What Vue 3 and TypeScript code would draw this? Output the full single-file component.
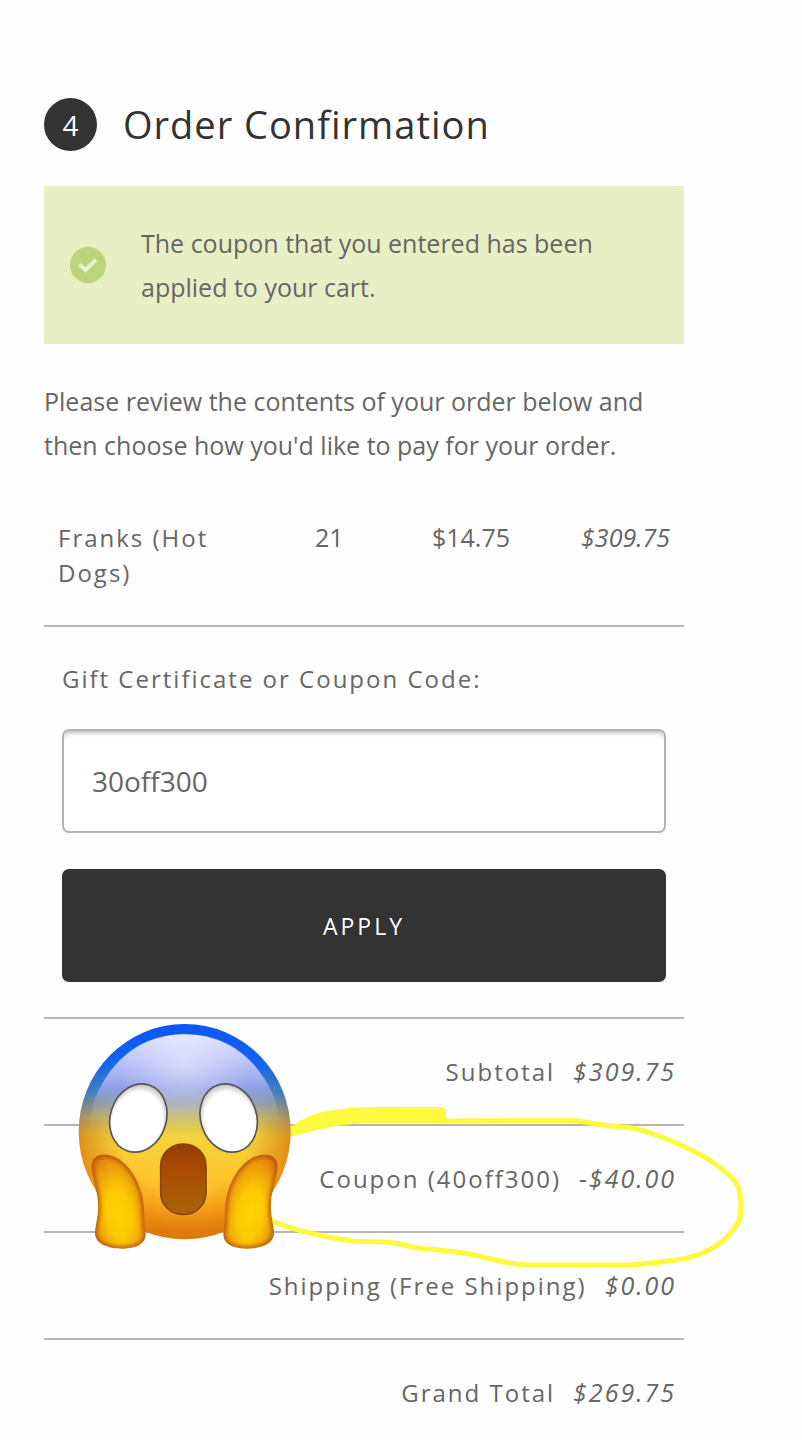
<script setup lang="ts">
import { ref } from 'vue'

interface OrderItem {
  name: string
  quantity: number
  price: string
  total: string
}

interface TotalLine {
  label: string
  amount: string
}

const items: OrderItem[] = [
  { name: 'Franks (Hot Dogs)', quantity: 21, price: '$14.75', total: '$309.75' },
]

const totals: TotalLine[] = [
  { label: 'Subtotal', amount: '$309.75' },
  { label: 'Coupon (40off300)', amount: '-$40.00' },
  { label: 'Shipping (Free Shipping)', amount: '$0.00' },
  { label: 'Grand Total', amount: '$269.75' },
]

const code = ref('30off300')
</script>

<template>
  <main class="page">
    <header class="step">
      <span class="badge">4</span>
      <h1>Order Confirmation</h1>
    </header>

    <div class="notice" role="status">
      <svg class="check" viewBox="0 0 36 36" aria-hidden="true">
        <circle cx="18" cy="18" r="18" fill="#bcd57c" />
        <path d="M9.500 17.500 L15.500 23 L26 12.500" fill="none" stroke="#e9f0cb" stroke-width="4" />
      </svg>
      <p>The coupon that you entered has been applied to your cart.</p>
    </div>

    <p class="intro">
      Please review the contents of your order below and then choose how you'd like to pay for your order.
    </p>

    <table class="items">
      <tbody>
        <tr v-for="item in items" :key="item.name">
          <th scope="row">{{ item.name }}</th>
          <td class="qty">{{ item.quantity }}</td>
          <td class="price">{{ item.price }}</td>
          <td class="sum">{{ item.total }}</td>
        </tr>
      </tbody>
    </table>

    <form class="coupon" @submit.prevent>
      <label for="code">Gift Certificate or Coupon Code:</label>
      <input id="code" v-model="code" type="text" />
      <button type="submit">APPLY</button>
    </form>

    <section class="totals">
      <table>
        <tbody>
          <tr v-for="line in totals" :key="line.label">
            <td><span class="label">{{ line.label }}</span><em>{{ line.amount }}</em></td>
          </tr>
        </tbody>
      </table>

      <svg class="scribble" viewBox="270 1090 490 190" aria-hidden="true">
        <path
          d="M289 1128 Q300 1120 312 1115 C337 1107 365 1107 387 1107 L440 1107 Q446 1108 446 1114 L446 1121 L440 1123 L365 1123 Q335 1125 313 1131 L289 1137 Z"
          fill="#fdf93c"
        />
        <path
          d="M440 1121 L570 1120.500 C585 1121 592 1124 603 1125 C615 1127 622 1126 635 1128.500 C650 1132 670 1140 687 1148 C702 1155 720 1166 731 1177 C739 1184 740 1192 741 1202 C741 1212 741 1218 738 1223 C727 1241 708 1254 683 1259 C665 1262 650 1263 633 1265 L527 1265 C500 1264 483 1255 457 1252 C440 1250 430 1250 412 1247 C400 1244 395 1242 383 1242 L352 1241 C335 1239 325 1237 310 1233 C293 1229 283 1226 268 1219"
          fill="none"
          stroke="#fdf93c"
          stroke-width="5"
          stroke-linejoin="round"
        />
      </svg>

      <svg class="emoji" viewBox="0 0 750 750" role="img" aria-label="Screaming face">
        <defs>
          <linearGradient id="rim" x1="0" y1="0" x2="0" y2="1">
            <stop offset="0" stop-color="#0b56f5" />
            <stop offset="0.180" stop-color="#1264f0" />
            <stop offset="0.320" stop-color="#3a7cb8" />
            <stop offset="0.430" stop-color="#a58b5c" />
            <stop offset="0.520" stop-color="#dc8c1c" />
            <stop offset="0.800" stop-color="#ef9410" />
            <stop offset="1" stop-color="#dd760a" />
          </linearGradient>
          <linearGradient id="face" gradientUnits="userSpaceOnUse" x1="0" y1="73" x2="0" y2="688">
            <stop offset="0" stop-color="#dde0ff" />
            <stop offset="0.120" stop-color="#bcc3fa" />
            <stop offset="0.260" stop-color="#94a3e8" />
            <stop offset="0.340" stop-color="#a0a8b0" />
            <stop offset="0.420" stop-color="#d0c263" />
            <stop offset="0.500" stop-color="#f5d33a" />
            <stop offset="0.700" stop-color="#ffc62c" />
            <stop offset="0.860" stop-color="#fbaa20" />
            <stop offset="1" stop-color="#e07a0a" />
          </linearGradient>
          <radialGradient id="shine" cx="0.500" cy="0.160" r="0.330">
            <stop offset="0" stop-color="#fff" stop-opacity="0.450" />
            <stop offset="1" stop-color="#fff" stop-opacity="0" />
          </radialGradient>
          <radialGradient id="core" gradientUnits="userSpaceOnUse" cx="374" cy="355" r="325">
            <stop offset="0.600" stop-color="#fff" />
            <stop offset="1" stop-color="#000" />
          </radialGradient>
          <linearGradient id="topFade" gradientUnits="userSpaceOnUse" x1="0" y1="220" x2="0" y2="350">
            <stop offset="0" stop-color="#fff" />
            <stop offset="1" stop-color="#000" />
          </linearGradient>
          <linearGradient id="lowFade" gradientUnits="userSpaceOnUse" x1="0" y1="170" x2="0" y2="300">
            <stop offset="0" stop-color="#000" />
            <stop offset="1" stop-color="#fff" />
          </linearGradient>
          <mask id="coreMask" maskUnits="userSpaceOnUse" x="0" y="0" width="750" height="750">
            <rect width="750" height="750" fill="url(#core)" />
          </mask>
          <mask id="topMask" maskUnits="userSpaceOnUse" x="0" y="0" width="750" height="750">
            <rect width="750" height="750" fill="url(#topFade)" />
          </mask>
          <mask id="lowMask" maskUnits="userSpaceOnUse" x="0" y="0" width="750" height="750">
            <rect width="750" height="750" fill="url(#lowFade)" />
          </mask>
          <radialGradient id="eye" cx="0.500" cy="0.560" r="0.560">
            <stop offset="0.780" stop-color="#fff" />
            <stop offset="1" stop-color="#bdbdc0" />
          </radialGradient>
          <linearGradient id="mouth" x1="0" y1="0" x2="0" y2="1">
            <stop offset="0" stop-color="#923d08" />
            <stop offset="0.300" stop-color="#a94903" />
            <stop offset="1" stop-color="#a76409" />
          </linearGradient>
          <radialGradient id="palm" gradientUnits="userSpaceOnUse" cx="0" cy="0" r="1" gradientTransform="translate(176 610) rotate(-8) scale(95 185)">
            <stop offset="0" stop-color="#ffd500" />
            <stop offset="0.400" stop-color="#fdc803" />
            <stop offset="0.800" stop-color="#ec9a0c" />
            <stop offset="1" stop-color="#d87a0a" />
          </radialGradient>
          <filter id="glow" x="-20%" y="-20%" width="140%" height="140%">
            <feGaussianBlur stdDeviation="2" />
          </filter>
          <filter id="shade" x="-20%" y="-20%" width="140%" height="140%">
            <feGaussianBlur stdDeviation="6" />
          </filter>
          <path
            id="hand"
            d="M94 462 C98 440 118 431 143 434 C190 442 228 490 245 550 C257 595 250 645 257 672 C258 700 232 715 190 716 C145 717 108 702 105 672 C106 640 116 620 114 580 C112 535 94 500 94 462 Z"
          />
          <clipPath id="handClip">
            <use href="#hand" />
          </clipPath>
          <clipPath id="head">
            <ellipse cx="374" cy="365" rx="318" ry="323" />
          </clipPath>
        </defs>

        <ellipse cx="374" cy="365" rx="318" ry="323" fill="url(#rim)" />
        <g clip-path="url(#head)">
          <g mask="url(#lowMask)">
            <rect x="50" y="40" width="650" height="650" fill="url(#face)" mask="url(#coreMask)" />
          </g>
          <g mask="url(#topMask)">
            <path
              d="M374 73 C500 73 595 145 645 270 L670 380 L78 380 L103 270 C153 145 248 73 374 73 Z"
              fill="url(#face)"
              filter="url(#glow)"
            />
          </g>
          <ellipse cx="374" cy="365" rx="300" ry="292" fill="url(#shine)" />
        </g>

        <ellipse cx="235" cy="328" rx="87" ry="105" transform="rotate(18 235 328)" fill="#e6c33c" opacity="0.600" filter="url(#glow)" />
        <ellipse cx="506" cy="328" rx="87" ry="105" transform="rotate(-18 506 328)" fill="#e6c33c" opacity="0.600" filter="url(#glow)" />
        <ellipse cx="235" cy="324" rx="84" ry="104" transform="rotate(18 235 324)" fill="url(#eye)" stroke="#55565a" stroke-width="5" />
        <ellipse cx="506" cy="324" rx="84" ry="104" transform="rotate(-18 506 324)" fill="url(#eye)" stroke="#55565a" stroke-width="5" />

        <rect x="299" y="401" width="142" height="216" rx="68" fill="#ffd452" />
        <rect x="302" y="402" width="136" height="212" rx="66" fill="url(#mouth)" stroke="#8a4306" stroke-width="5" />

        <g clip-path="url(#handClip)">
          <use href="#hand" fill="url(#palm)" />
          <use href="#hand" fill="none" stroke="#b0500a" stroke-width="12" filter="url(#shade)" />
        </g>
        <g transform="translate(747 0) scale(-1 1)">
          <g clip-path="url(#handClip)">
            <use href="#hand" fill="url(#palm)" />
            <use href="#hand" fill="none" stroke="#b0500a" stroke-width="12" filter="url(#shade)" />
          </g>
        </g>
      </svg>
    </section>
  </main>
</template>

<style>
body {
  background: #fefefe;
}
</style>

<style scoped>
.page {
  padding: 98px 118px 28px 44px;
  color: #666;
  font-family: 'Open Sans', 'Noto Sans', sans-serif;
  font-size: 25px;
  line-height: 44px;
}

.step {
  display: flex;
  align-items: center;
  gap: 26px;
  margin-bottom: 35px;
  color: #333;
}

.badge {
  display: flex;
  align-items: center;
  justify-content: center;
  width: 53px;
  height: 53px;
  border-radius: 50%;
  background: #333;
  color: #fff;
  font-size: 28px;
}

h1 {
  margin: 0;
  font-size: 38px;
  font-weight: 400;
  line-height: 53px;
  letter-spacing: 1px;
}

.notice {
  display: flex;
  align-items: center;
  gap: 35px;
  padding: 35px 26px;
  background: #e9efc5;
}

.notice p {
  flex: 1;
  margin: 0;
}

.check {
  flex: none;
  width: 36px;
  height: 36px;
}

.intro {
  margin: 35px 0;
}

table {
  width: 100%;
  border-collapse: collapse;
}

.items {
  table-layout: fixed;
  border-bottom: 2px solid #b5b5b5;
  line-height: 35px;
}

.items th,
.items td {
  box-sizing: border-box;
  padding: 18px 14px 35px;
  text-align: right;
  vertical-align: top;
}

.items th {
  width: 32%;
  text-align: left;
  font-size: 24px;
  font-weight: 500;
  letter-spacing: 2px;
}

.items .price {
  width: 26%;
}

.items .sum {
  width: 25%;
  font-style: italic;
}

.coupon {
  display: flex;
  flex-direction: column;
  padding: 34px 18px 35px;
}

label {
  margin-bottom: 33px;
  font-size: 24px;
  line-height: 35px;
  font-weight: 500;
  letter-spacing: 2px;
}

input {
  box-sizing: border-box;
  width: 100%;
  height: 104px;
  margin-bottom: 36px;
  padding: 0 28px;
  border: 2px solid #b3b3b3;
  border-radius: 7px;
  background: #fff;
  box-shadow: inset 0 5px 4px -3px #bbb;
  color: #666;
  font: inherit;
  font-size: 28px;
}

button {
  height: 113px;
  border: 0;
  border-radius: 7px;
  background: #333;
  color: #fff;
  font: inherit;
  font-size: 23px;
  letter-spacing: 3px;
}

.totals {
  position: relative;
  font-size: 24px;
  line-height: 35px;
  font-weight: 500;
  letter-spacing: 2px;
}

.totals td {
  height: 105px;
  padding: 0 8px;
  border-top: 2px solid #b5b5b5;
  text-align: right;
}

em {
  margin-left: 18px;
  font-size: 25px;
}

.scribble {
  position: absolute;
  top: 73px;
  left: 226px;
  width: 490px;
  height: 190px;
}

.emoji {
  position: absolute;
  top: -7px;
  left: 16px;
  width: 250px;
  height: 250px;
}
</style>
